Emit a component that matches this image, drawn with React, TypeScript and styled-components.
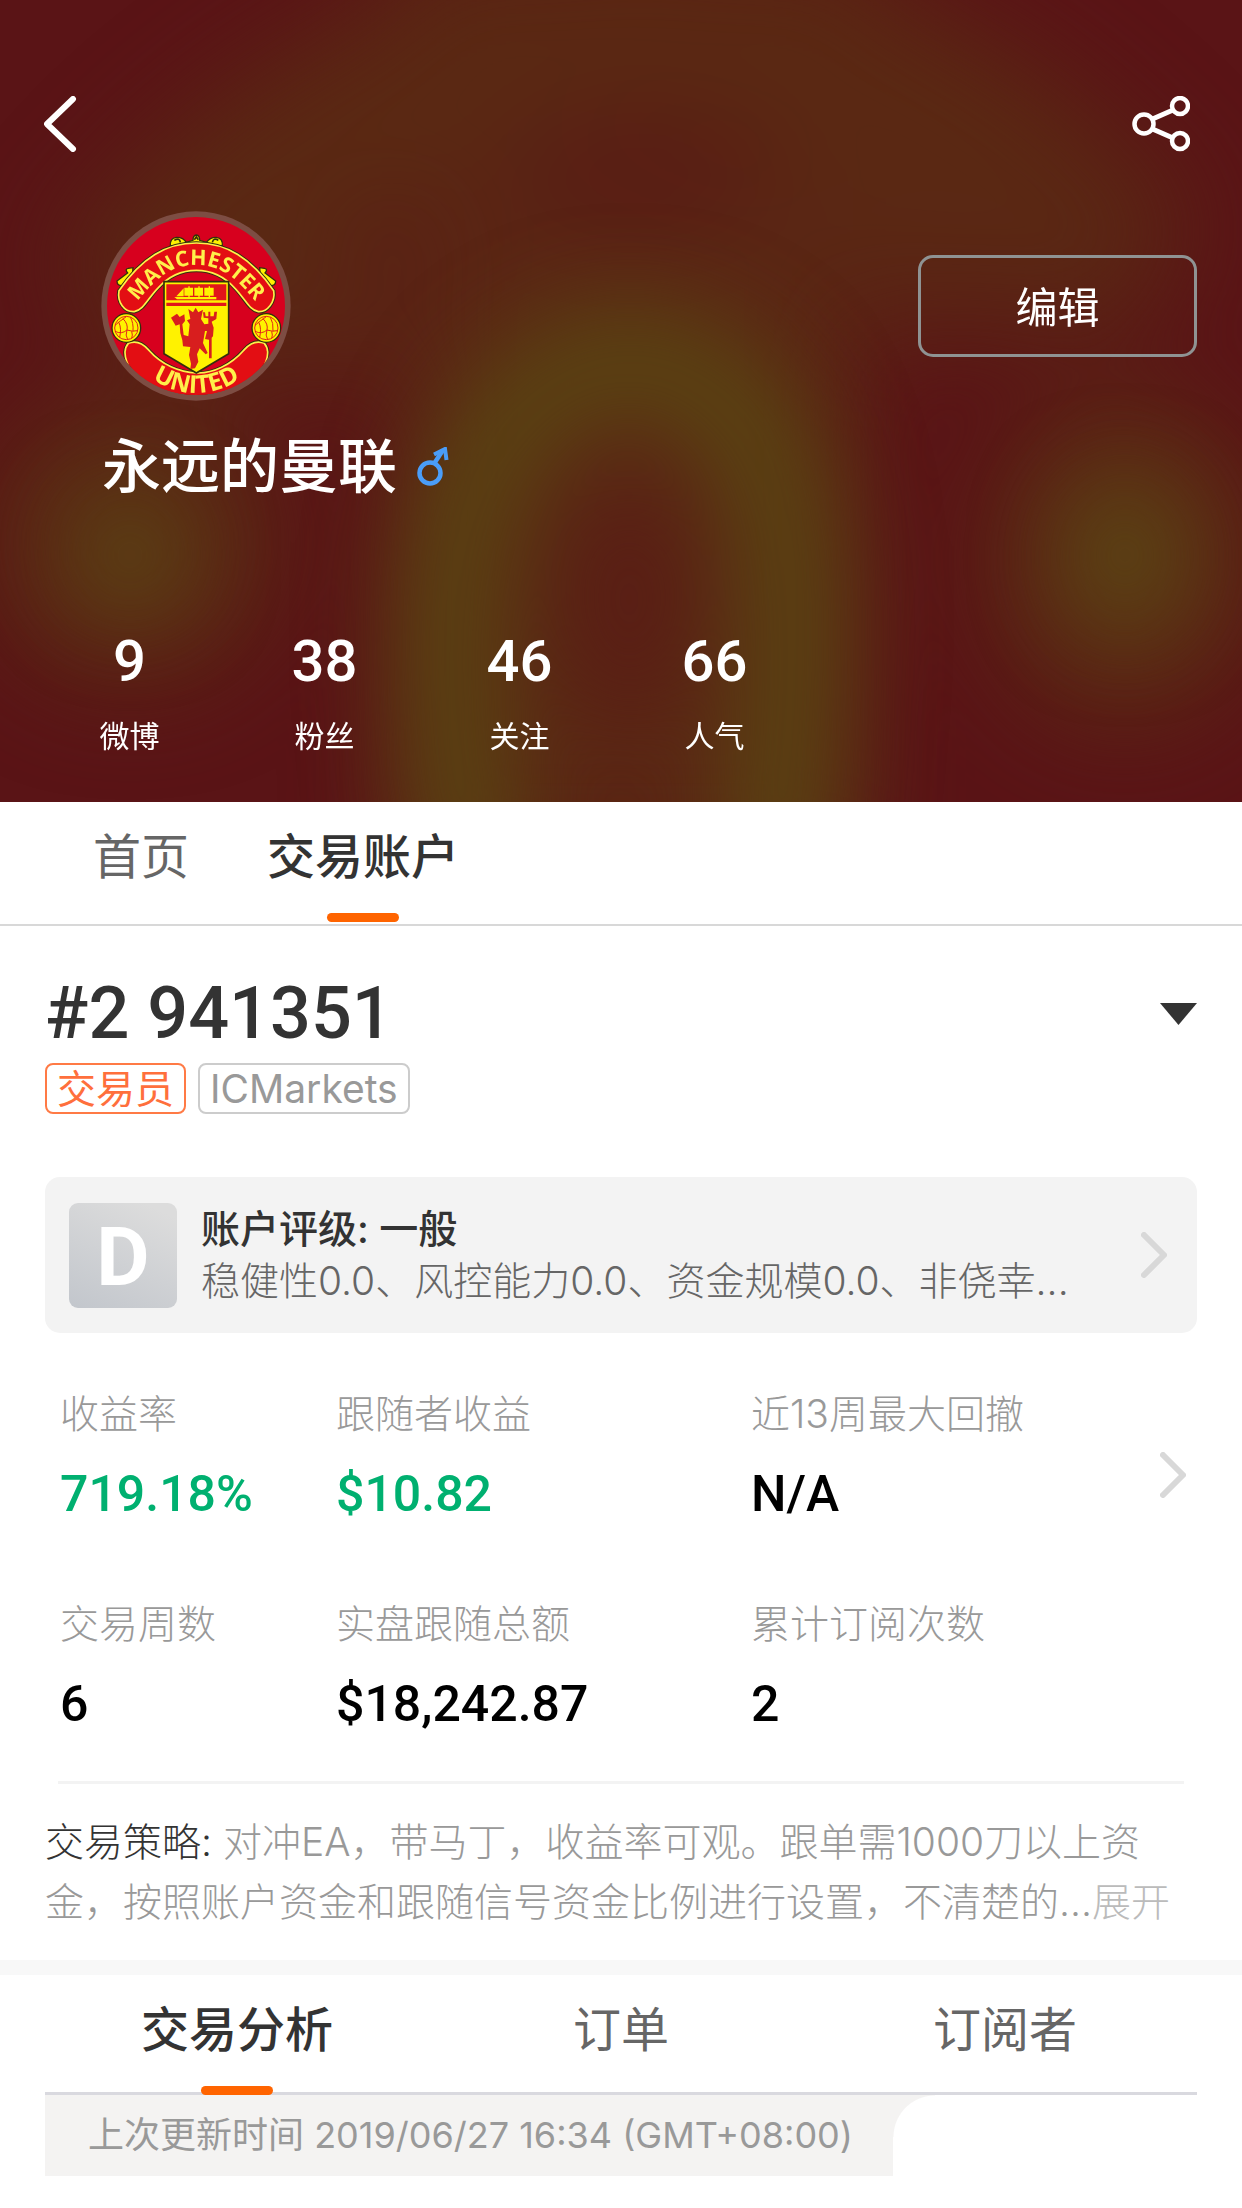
import React, { useState } from "react";
import styled, { createGlobalStyle } from "styled-components";

const GlobalStyle = createGlobalStyle`
  *, *::before, *::after { box-sizing: border-box; }
  body {
    margin: 0;
    background: #ffffff;
    color: #333333;
    font-family: Inter, "Noto Sans CJK SC", sans-serif;
    font-size: 39px;
    font-weight: 300;
  }
  button {
    margin: 0;
    padding: 0;
    border: 0;
    background: none;
    color: inherit;
    font: inherit;
    cursor: pointer;
  }
  svg { display: block; }
`;

const numeric = `Roboto, "Noto Sans CJK SC", sans-serif`;

const Header = styled.header`
  position: relative;
  overflow: hidden;
  padding: 96px 45px 45px 44px;
  color: #ffffff;
  background: #5a1416;
`;

const Backdrop = styled.svg`
  position: absolute;
  inset: 0;
  width: 100%;
  height: 100%;
`;

const HeaderContent = styled.div`
  position: relative;
`;

const TopBar = styled.nav`
  display: flex;
  justify-content: space-between;
  padding-right: 7px;
`;

const ProfileRow = styled.div`
  display: flex;
  align-items: center;
  justify-content: space-between;
  margin: 59px 0 26px;
  padding-left: 57px;
`;

const EditButton = styled.button`
  width: 279px;
  height: 102px;
  padding-bottom: 4px;
  border: 3px solid #8f9393;
  border-radius: 15px;
  font-size: 42px;
  font-weight: 400;
`;

const NameRow = styled.div`
  display: flex;
  align-items: center;
  gap: 20px;
  padding-left: 58px;
`;

const Name = styled.h1`
  margin: 0;
  font-size: 59px;
  font-weight: 500;
  line-height: 80px;
`;

const Stats = styled.ul`
  display: flex;
  margin: 121px 0 0 -12px;
  padding: 0;
  list-style: none;
`;

const Stat = styled.li`
  display: flex;
  flex-direction: column;
  gap: 21px;
  width: 195px;
  text-align: center;
`;

const StatValue = styled.span`
  font-family: ${numeric};
  font-size: 58px;
  font-weight: 500;
  line-height: 66px;
`;

const StatLabel = styled.span`
  font-size: 30px;
  font-weight: 400;
  line-height: 42px;
`;

const PageTabs = styled.nav`
  display: flex;
  gap: 78px;
  padding: 25px 93px 2px;
  border-bottom: 2px solid #d8d8d8;
`;

const Tab = styled.button<{ $active: boolean }>`
  display: flex;
  flex-direction: column;
  align-items: center;
  gap: 26px;
  font-size: 48px;
  font-weight: ${(p) => (p.$active ? 500 : 400)};
  line-height: 60px;
  color: ${(p) => (p.$active ? "#333333" : "#666666")};

  &::after {
    content: "";
    width: 72px;
    height: 9px;
    border-radius: 5px;
    background: ${(p) => (p.$active ? "#ff6400" : "transparent")};
  }
`;

const Account = styled.section`
  padding: 46px 45px 28px;
`;

const AccountHead = styled.div`
  display: flex;
  align-items: center;
  justify-content: space-between;
`;

const AccountTitle = styled.h2`
  margin: 0;
  font-family: ${numeric};
  font-size: 72px;
  font-weight: 500;
  line-height: 84px;
`;

const Tags = styled.div`
  display: flex;
  gap: 12px;
  margin-top: 7px;
`;

const Tag = styled.span<{ $accent?: boolean }>`
  height: 51px;
  padding: 0 10px;
  border: 2px solid ${(p) => (p.$accent ? "#ff7a45" : "#cccccc")};
  border-radius: 8px;
  color: ${(p) => (p.$accent ? "#ff6f3c" : "#999999")};
  font-weight: 400;
  line-height: 47px;
`;

const RatingCard = styled.button`
  display: flex;
  align-items: center;
  width: 100%;
  height: 156px;
  margin-top: 63px;
  padding: 0 30px 0 24px;
  border-radius: 15px;
  background: #f3f3f3;
  text-align: left;
`;

const Grade = styled.span`
  display: grid;
  flex: none;
  place-items: center;
  width: 108px;
  height: 105px;
  margin-right: 24px;
  padding-top: 4px;
  border-radius: 9px;
  background: linear-gradient(25deg, #c2c6cc, #dcdcdc 90%);
  color: #ffffff;
  font-family: ${numeric};
  font-size: 82px;
  font-weight: 700;
  line-height: 100px;
`;

const RatingText = styled.span`
  display: flex;
  flex: 1;
  flex-direction: column;
  min-width: 0;
  padding-right: 62px;
  line-height: 52px;
`;

const RatingTitle = styled.span`
  font-weight: 500;
`;

const RatingDetail = styled.span`
  overflow: hidden;
  color: #666666;
  text-overflow: ellipsis;
  white-space: nowrap;
`;

const MetricsRow = styled.div`
  display: flex;
  align-items: flex-start;
  margin: 55px 0 47px;
  padding: 0 11px 0 15px;
`;

const Metrics = styled.dl`
  display: grid;
  flex: 1;
  grid-template-columns: 276px 415px 1fr;
  row-gap: 74px;
  margin: 0;
`;

const Metric = styled.div`
  display: flex;
  flex-direction: column;
  gap: 24px;
`;

const MetricLabel = styled.dt`
  color: #999999;
  line-height: 52px;
`;

const MetricValue = styled.dd<{ $gain?: boolean }>`
  margin: 0;
  color: ${(p) => (p.$gain ? "#00b070" : "#000000")};
  font-family: ${numeric};
  font-size: 50px;
  font-weight: 500;
  line-height: 60px;
`;

const MoreButton = styled.button`
  padding-top: 64px;
`;

const Divider = styled.hr`
  height: 3px;
  margin: 0 13px 28px;
  border: 0;
  background: #f3f3f3;
`;

const Strategy = styled.p`
  margin: 0;
  padding-right: 24px;
  color: #999999;
  line-height: 60px;
`;

const StrategyLabel = styled.span`
  color: #333333;
`;

const Expand = styled.button`
  color: #bbbbbb;
`;

const Band = styled.div`
  height: 15px;
  background: #f8f8f8;
`;

const Report = styled.section`
  padding: 25px 45px 32px;
`;

const ReportTabs = styled.nav`
  display: grid;
  grid-template-columns: repeat(3, 1fr);
  border-bottom: 3px solid #d9d9df;

  & > button { margin-bottom: -3px; }
`;

const Updated = styled.p`
  position: relative;
  width: fit-content;
  height: 81px;
  margin: 0;
  padding: 0 40px 0 43px;
  background: #f4f3f2;
  color: #999999;
  font-size: 36px;
  font-weight: 400;
  line-height: 81px;

  &::after {
    content: "";
    position: absolute;
    top: 0;
    left: 100%;
    width: 42px;
    height: 42px;
    background: radial-gradient(circle at 100% 100%, transparent 41px, #f4f3f2 42px);
  }
`;

function BlurredBackdrop() {
  return (
    <Backdrop viewBox="0 0 1242 802" preserveAspectRatio="none" aria-hidden="true">
      <defs>
        <filter id="soft" x="-50%" y="-50%" width="200%" height="200%" colorInterpolationFilters="sRGB">
          <feGaussianBlur stdDeviation="52" />
        </filter>
        <filter id="softer" x="-50%" y="-50%" width="200%" height="200%" colorInterpolationFilters="sRGB">
          <feGaussianBlur stdDeviation="46" />
        </filter>
      </defs>
      <rect width="1242" height="802" fill="#5a1416" />
      <g filter="url(#soft)">
        <path d="M130 330C230 190 400 70 640 20C880 70 980 130 1130 290" fill="none" stroke="#5a2913" strokeWidth="190" />
        <path d="M400 -60H880V60H400Z" fill="#5a2813" />
        <path d="M420 160H850V870H400Z" fill="#5a2714" />
        <path d="M840 190H1150V330H860Z" fill="#5a2714" />
        <path d="M130 260H400V380H130Z" fill="#5a2714" />
        <ellipse cx="130" cy="540" rx="140" ry="140" fill="#5a2c14" />
        <ellipse cx="1125" cy="560" rx="130" ry="160" fill="#5a2c14" />
        <ellipse cx="630" cy="175" rx="130" ry="50" fill="#591a15" />
      </g>
      <g filter="url(#softer)">
        <path d="M480 900C430 660 440 500 520 410Q630 310 740 410C810 520 800 650 770 900" fill="none" stroke="#5a4712" strokeWidth="104" opacity="0.9" />
        <ellipse cx="130" cy="555" rx="50" ry="54" fill="#5b4614" />
        <ellipse cx="1125" cy="555" rx="58" ry="70" fill="#5b4614" />
        <ellipse cx="628" cy="600" rx="56" ry="120" fill="#5a1d15" />
      </g>
    </Backdrop>
  );
}

function Ball({ cx }: { cx: number }) {
  return (
    <g transform={`translate(${cx} 415)`} fill="none" stroke="#e2231a" strokeWidth="3">
      <circle r="43" fill="#fff200" stroke="#33300c" strokeWidth="4" />
      <circle r="35" />
      <path d="M-34-8Q-18-22 0-34M-10-28Q6-12 2 6Q-14 20-34 10M2 6Q18 12 34 8M2 6Q-4 22 4 35M12-32Q22-16 20 10M-22-16Q-14 2-20 28M16 10Q20 22 16 31" />
    </g>
  );
}

function Crest() {
  const banner =
    "M118 303C186 204 260 160 350 160S514 204 582 303C588 338 562 368 536 366C508 360 498 330 466 296C432 258 394 242 350 242S268 258 234 296C202 330 192 360 164 366C134 368 112 338 118 303Z";
  const ribbon =
    "M146 461C168 452 190 462 206 480C246 526 300 548 350 550S454 526 494 480C510 462 532 452 554 461C572 482 562 516 544 546L510 620H190L156 546C138 516 128 482 146 461Z";
  return (
    <svg width="190" height="190" viewBox="64 64 570 570" role="img" aria-label="Manchester United">
      <defs>
        <clipPath id="crestClip">
          <circle cx="349" cy="349" r="267" />
        </clipPath>
        <path id="arcTop" d="M156 358C226 264 276 226 350 226S474 264 544 358" />
        <path id="arcBottom" d="M170 535Q350 685 530 535" />
      </defs>
      <circle cx="349" cy="349" r="284" fill="#7d4d43" />
      <g clipPath="url(#crestClip)">
        <rect x="64" y="64" width="570" height="570" fill="#d7001e" />
        <g fill="#fff200" stroke="#33300c" strokeWidth="4">
          <path d="M272 168Q270 146 290 143Q310 142 320 158L340 152Q340 137 350 136Q360 137 360 152L380 158Q392 142 410 143Q430 146 428 168Z" />
          <path d="M112 274L144 250Q134 238 146 236L160 234L158 262L130 288Q112 290 112 274Z" />
          <path d="M588 274L556 250Q566 238 554 236L540 234L542 262L570 288Q588 290 588 274Z" />
        </g>
        <path d="M284 152Q300 142 302 158M398 158Q402 142 416 152M344 150L350 142L356 150" fill="none" stroke="#33300c" strokeWidth="5" />
        <path d={banner} fill="#e30e13" stroke="#33300c" strokeWidth="11" />
        <path d={banner} fill="#e30e13" stroke="#fff04a" strokeWidth="5" />
        <path d={ribbon} fill="#e30e13" stroke="#33300c" strokeWidth="11" />
        <path d={ribbon} fill="#e30e13" stroke="#fff04a" strokeWidth="5" />
        <Ball cx={140} />
        <Ball cx={560} />
        <path d="M253 276H447V492L350 550L253 492Z" fill="#fff200" stroke="#33300c" strokeWidth="5" />
        <path d="M260 284H440V332H260ZM260 339H440V349H260Z" fill="#e2161a" />
        <path d="M284 322H410V329H292ZM290 320L312 296V320ZM314 294H340V318H314ZM344 294H370V318H344ZM374 294H402V318H374ZM326 290H330V324H326ZM356 290H360V324H356ZM387 290H391V324H387Z" fill="#fff200" />
        <path d="M274 384L292 372L300 382L314 374L316 394L308 404L312 436L326 440L330 404L322 392L332 388L326 358L340 368L348 354L356 368L370 360L364 388L374 404L386 402V386L372 384L370 368H376L378 380H386V366H392V380H402L404 366H412L410 388L396 396L402 414L400 440L396 444V506H388V450L376 448L382 424H376L370 460L384 490L378 494L360 476L352 494L356 516L346 536L332 538L334 522L328 496L332 472L310 470L308 452L302 430L300 404L288 408Z" fill="#d81e1e" />
        <g fill="#fff04a" fontFamily="'Open Sans', Lato, sans-serif" fontWeight="700">
          <text fontSize="64" textAnchor="middle">
            <textPath href="#arcTop" startOffset="50%">MANCHESTER</textPath>
          </text>
          <text fontSize="74" textAnchor="middle">
            <textPath href="#arcBottom" startOffset="50%">UNITED</textPath>
          </text>
        </g>
      </g>
    </svg>
  );
}

function BackIcon() {
  return (
    <svg width="33" height="56" viewBox="0 0 33 56" fill="none" stroke="#ffffff" strokeWidth="6" strokeLinecap="round" strokeLinejoin="round">
      <path d="M29 3L3 28L29 53" />
    </svg>
  );
}

function ShareIcon() {
  return (
    <svg width="58" height="56" viewBox="0 0 58 56" fill="none" stroke="#ffffff" strokeWidth="4.500">
      <circle cx="12" cy="28" r="9.500" />
      <circle cx="48" cy="10" r="8" />
      <circle cx="48" cy="45" r="8" />
      <path d="M20.500 23L41 14M20.500 33L41 42" strokeWidth="5" />
    </svg>
  );
}

function MaleIcon() {
  return (
    <svg width="32" height="40" viewBox="0 0 32 40" fill="none" stroke="#4a9df8" strokeWidth="4.500">
      <circle cx="13" cy="26" r="10.500" />
      <path d="M17.500 16L26 3" />
      <path d="M17 7.500L28 2L29.500 13" strokeWidth="4" />
    </svg>
  );
}

function Chevron() {
  return (
    <svg width="26" height="46" viewBox="0 0 26 46" fill="none" stroke="#d8d8d8" strokeWidth="6" strokeLinecap="round" strokeLinejoin="round">
      <path d="M3 3L23 23L3 43" />
    </svg>
  );
}

const stats = [
  { value: "9", label: "微博" },
  { value: "38", label: "粉丝" },
  { value: "46", label: "关注" },
  { value: "66", label: "人气" },
];

const metrics = [
  { label: "收益率", value: "719.18%", gain: true },
  { label: "跟随者收益", value: "$10.82", gain: true },
  { label: "近13周最大回撤", value: "N/A" },
  { label: "交易周数", value: "6" },
  { label: "实盘跟随总额", value: "$18,242.87" },
  { label: "累计订阅次数", value: "2" },
];

const pageTabs = ["首页", "交易账户"];
const reportTabs = ["交易分析", "订单", "订阅者"];

export default function App() {
  const [page, setPage] = useState("交易账户");
  const [report, setReport] = useState("交易分析");

  return (
    <>
      <GlobalStyle />
      <Header>
        <BlurredBackdrop />
        <HeaderContent>
          <TopBar>
            <button aria-label="返回"><BackIcon /></button>
            <button aria-label="分享"><ShareIcon /></button>
          </TopBar>
          <ProfileRow>
            <Crest />
            <EditButton>编辑</EditButton>
          </ProfileRow>
          <NameRow>
            <Name>永远的曼联</Name>
            <MaleIcon />
          </NameRow>
          <Stats>
            {stats.map((s) => (
              <Stat key={s.label}>
                <StatValue>{s.value}</StatValue>
                <StatLabel>{s.label}</StatLabel>
              </Stat>
            ))}
          </Stats>
        </HeaderContent>
      </Header>

      <PageTabs>
        {pageTabs.map((t) => (
          <Tab key={t} $active={t === page} onClick={() => setPage(t)}>{t}</Tab>
        ))}
      </PageTabs>

      <main>
        <Account>
          <AccountHead>
            <AccountTitle>#2 941351</AccountTitle>
            <button aria-label="切换账户">
              <svg width="37" height="22" viewBox="0 0 37 22">
                <path d="M0 0H37L18.500 22Z" fill="#333333" />
              </svg>
            </button>
          </AccountHead>
          <Tags>
            <Tag $accent>交易员</Tag>
            <Tag>ICMarkets</Tag>
          </Tags>

          <RatingCard>
            <Grade>D</Grade>
            <RatingText>
              <RatingTitle>账户评级: 一般</RatingTitle>
              <RatingDetail>稳健性0.0、风控能力0.0、资金规模0.0、非侥幸...</RatingDetail>
            </RatingText>
            <Chevron />
          </RatingCard>

          <MetricsRow>
            <Metrics>
              {metrics.map((m) => (
                <Metric key={m.label}>
                  <MetricLabel>{m.label}</MetricLabel>
                  <MetricValue $gain={m.gain}>{m.value}</MetricValue>
                </Metric>
              ))}
            </Metrics>
            <MoreButton aria-label="更多数据"><Chevron /></MoreButton>
          </MetricsRow>

          <Divider />
          <Strategy>
            <StrategyLabel>交易策略:</StrategyLabel> 对冲EA，带马丁，收益率可观。跟单需1000刀以上资金，按照账户资金和跟随信号资金比例进行设置，不清楚的...<Expand>展开</Expand>
          </Strategy>
        </Account>

        <Band />

        <Report>
          <ReportTabs>
            {reportTabs.map((t) => (
              <Tab key={t} $active={t === report} onClick={() => setReport(t)}>{t}</Tab>
            ))}
          </ReportTabs>
          <Updated>上次更新时间 2019/06/27 16:34 (GMT+08:00)</Updated>
        </Report>
      </main>
    </>
  );
}
